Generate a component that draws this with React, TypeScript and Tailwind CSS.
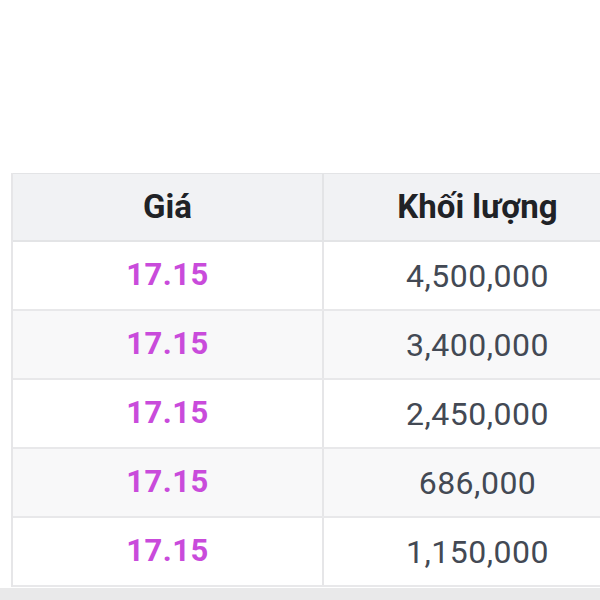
import React from "react";

const rows = [
  { p: "17.15", v: "4,500,000" },
  { p: "17.15", v: "3,400,000" },
  { p: "17.15", v: "2,450,000" },
  { p: "17.15", v: "686,000" },
  { p: "17.15", v: "1,150,000" },
];

export default function App() {
  return (
    <div
      className="w-[600px] h-[600px] bg-white overflow-hidden flex flex-col"
      style={{ fontFamily: "Roboto, 'Noto Sans', sans-serif" }}
    >
      <div className="h-[173px] shrink-0" />
      <div className="flex flex-col w-[595px] border-l-2 border-[#e6e6e8] ml-[11px] border-r border-r-[#e6e6e8]">
        <div className="flex h-[69px] bg-[#f1f2f4] border-t border-b-2 border-[#e3e4e6]">
          <div className="w-[311px] border-r-2 border-[#e3e4e6] flex items-center justify-center text-[33px] font-bold text-[#202226]">
            Giá
          </div>
          <div className="flex-1 flex items-center justify-center pl-[26px] text-[33px] font-bold text-[#202226]">
            Khối lượng
          </div>
        </div>
        {rows.map((r, i) => (
          <div
            key={i}
            className={`flex h-[69px] border-b-2 border-[#e8e8ea] ${i % 2 === 1 ? "bg-[#f8f8f9]" : "bg-white"}`}
          >
            <div className="w-[311px] border-r-2 border-[#e6e6e8] flex items-center justify-center text-[31px] font-bold text-[#c94bdb] tracking-[0.5px]">
              {r.p}
            </div>
            <div className="flex-1 flex items-center justify-center pl-[26px] text-[32px] text-[#434954] tracking-[0.5px]">
              {r.v}
            </div>
          </div>
        ))}
      </div>
      <div className="flex-1 bg-[#e9e9ea] mt-[1px]" />
    </div>
  );
}
